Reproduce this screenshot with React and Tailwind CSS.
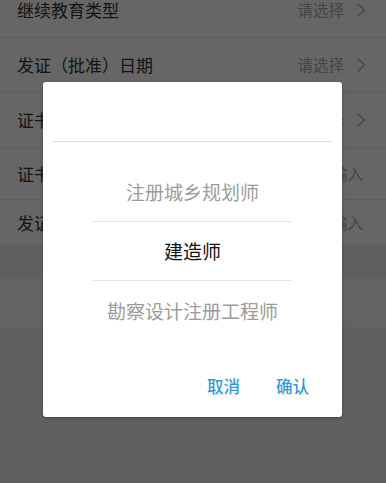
import React from "react";

const rows = [
  { label: "继续教育类型", value: "请选择", chevron: true, h: "h-[55px]" },
  { label: "发证（批准）日期", value: "请选择", chevron: true, h: "h-[55px]" },
  { label: "证书编号", value: "请选择", chevron: true, h: "h-[55px]" },
  { label: "证书名称", value: "请输入", chevron: false, h: "h-[52px]" },
  { label: "发证机关", value: "请输入", chevron: false, h: "h-[46px]" },
];

function Chevron() {
  return (
    <svg width="10" height="16" viewBox="0 0 10 16" className="ml-[12px]" fill="none">
      <path d="M1.5 1.5 L8.5 8 L1.5 14.5" stroke="#aaaaaa" strokeWidth="1.3" />
    </svg>
  );
}

export default function App() {
  const font = { fontFamily: '"Noto Sans CJK SC", "Noto Sans", sans-serif' };
  return (
    <div className="relative w-[386px] h-[483px] overflow-hidden bg-[#ededed]" style={font}>
      <div className="-mt-[17px] flex flex-col">
        {rows.map((r, i) => (
          <div
            key={i}
            className={`${r.h} flex items-center justify-between bg-white pl-[17px] ${r.chevron ? "pr-[20px]" : "pr-[23px]"} border-b border-[#e8e8e8]`}
          >
            <span className="text-[17px] text-[#333333]">{r.label}</span>
            <div className="flex items-center">
              <span className="text-[15.5px] text-[#aaaaaa]">{r.value}</span>
              {r.chevron && <Chevron />}
            </div>
          </div>
        ))}
        <div className="h-[32px]" />
        <div className="h-[49px] bg-[#f8f8f8]" />
      </div>

      <div className="absolute inset-0 bg-black/60" />

      <div className="absolute left-[43px] top-[82px] w-[299px] h-[335px] bg-white rounded-[3px] shadow-[0_1px_3px_rgba(0,0,0,0.3)] flex flex-col">
        <div className="h-[59px]" />
        <div className="mx-[10px] h-px bg-[#dcdcdc]" />
        <div className="pt-[21px] flex flex-col items-center">
          <div className="h-[59px] w-[199px] flex items-center justify-center text-[19px] text-[#9b9b9b] border-b border-[#e2e2e2]">
            注册城乡规划师
          </div>
          <div className="h-[59px] w-[199px] flex items-center justify-center text-[19px] text-[#111111] border-b border-[#e2e2e2]">
            建造师
          </div>
          <div className="h-[60px] w-[199px] flex items-center justify-center text-[19px] text-[#9b9b9b] whitespace-nowrap">
            勘察设计注册工程师
          </div>
        </div>
        <div className="pt-[34px] pr-[33px] flex justify-end gap-[36px]">
          <span className="text-[16.5px] leading-[22px] font-medium text-[#2f9bd8]">取消</span>
          <span className="text-[16.5px] leading-[22px] font-medium text-[#2f9bd8]">确认</span>
        </div>
      </div>
    </div>
  );
}
